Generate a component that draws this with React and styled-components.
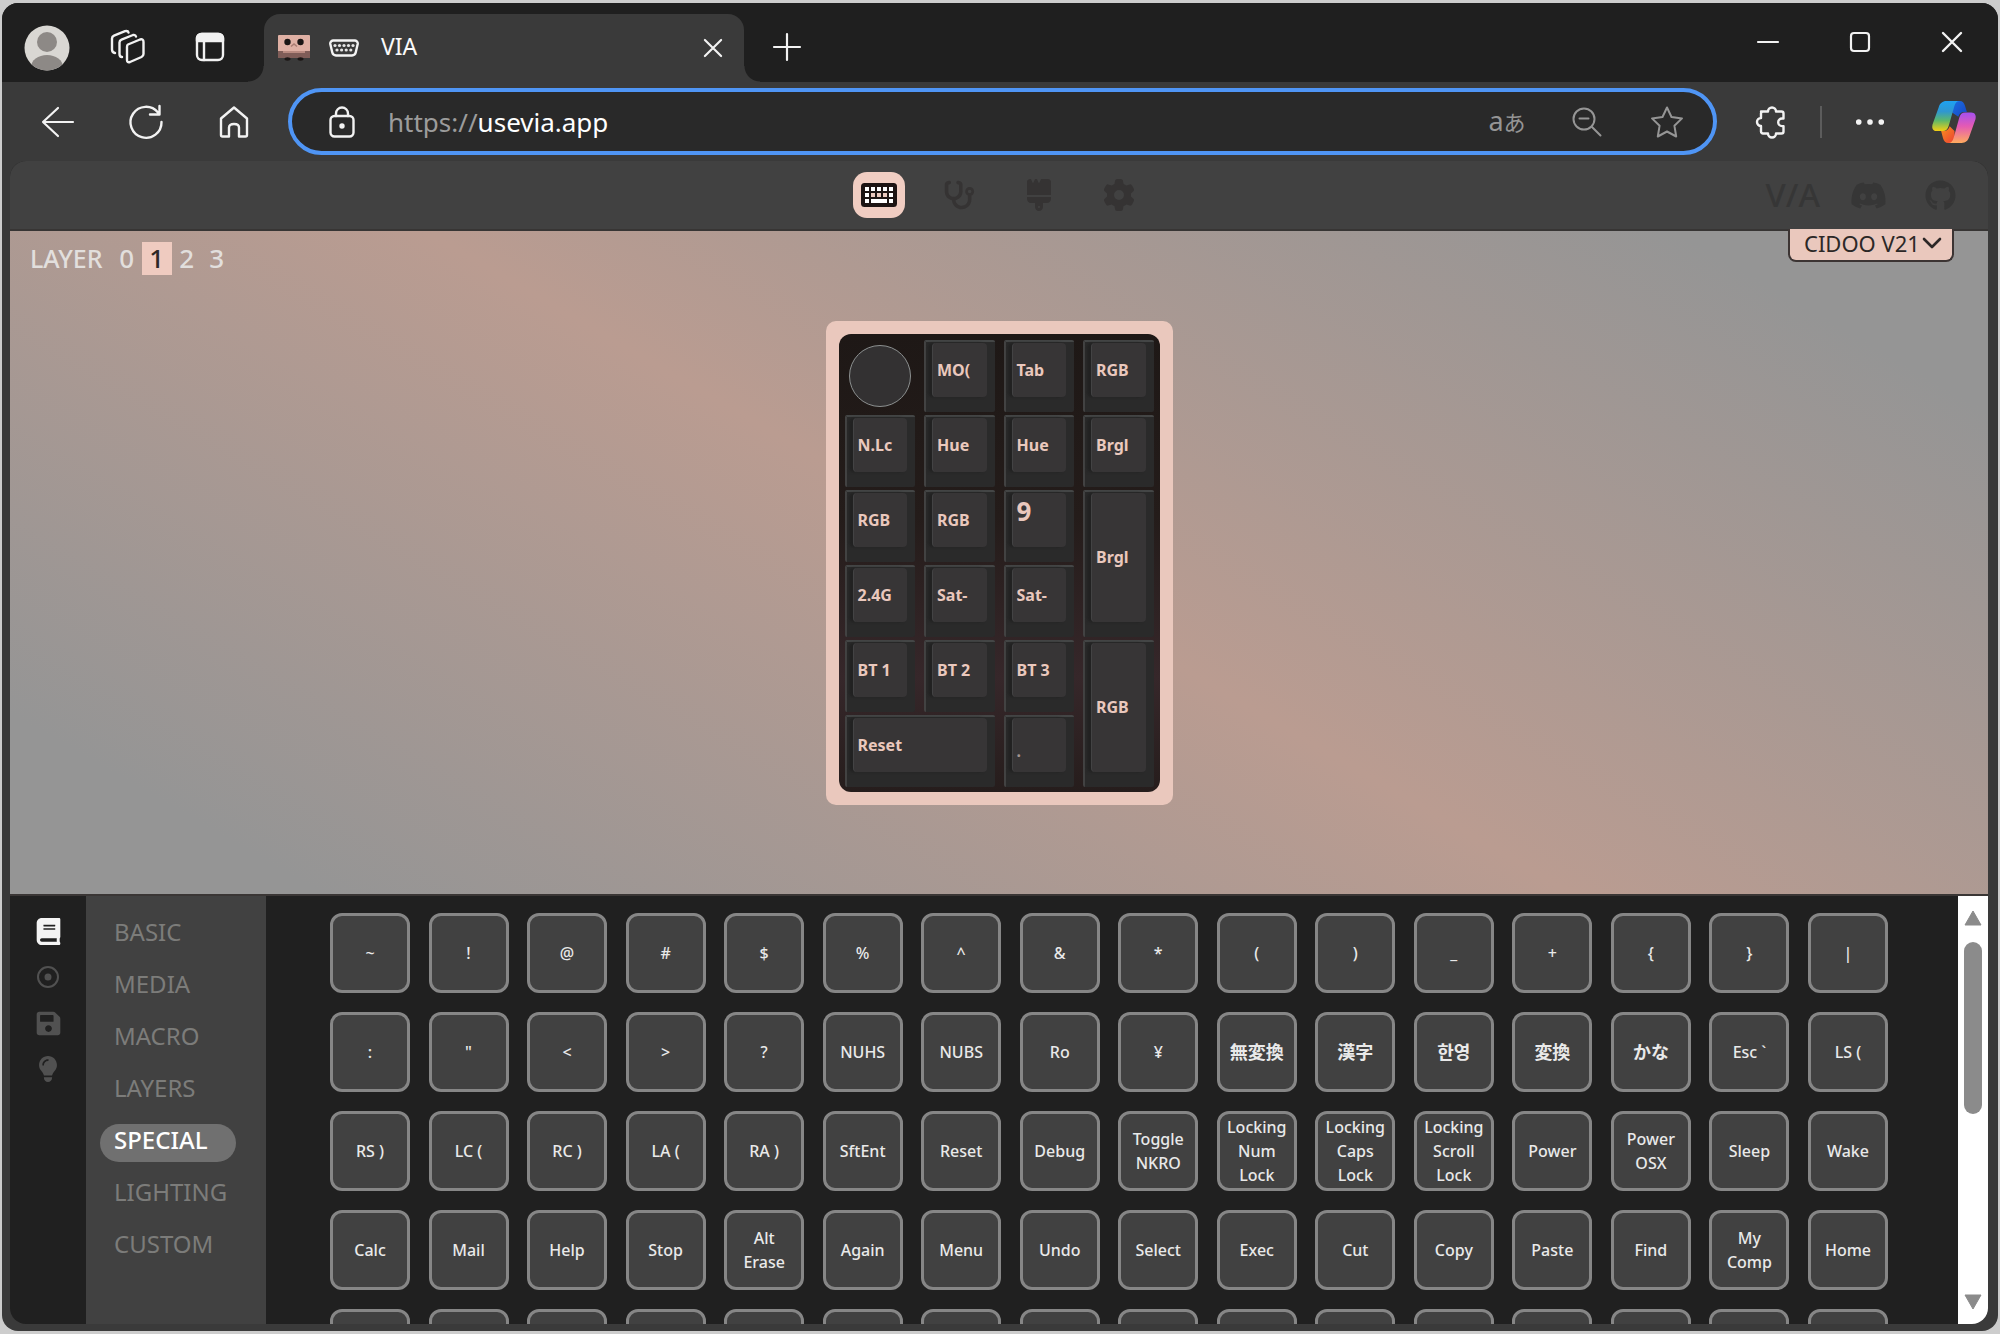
import React from "react";
import styled, { createGlobalStyle, css } from "styled-components";
import { FaStethoscope, FaBrush, FaGear, FaDiscord, FaGithub, FaLightbulb } from "react-icons/fa6";
import { FaBook, FaSave } from "react-icons/fa";

const sans = `"Noto Sans", "Noto Sans CJK JP", "Noto Sans CJK KR", sans-serif`;
const pink = "#eac8bd";

const GlobalStyle = createGlobalStyle`
  * { box-sizing: border-box; }
  body { margin: 0; background: #cdcdcd; font-family: ${sans}; }
  button, input, select { font-family: inherit; }
`;

const Window = styled.div`
  display: flex;
  flex-direction: column;
  height: 100vh;
  padding: 3px 2px;
`;

const Frame = styled.div`
  flex: 1;
  min-height: 0;
  display: flex;
  flex-direction: column;
  background: #3a3a3a;
  border-radius: 16px;
  overflow: hidden;
`;

const TitleBar = styled.header`
  display: flex;
  align-items: flex-end;
  height: 79px;
  background: #1f1f1f;
  padding: 0 24px 0 22px;
`;

const IconGroup = styled.div`
  display: flex;
  align-items: center;
  gap: ${(p) => p.$gap}px;
  height: ${(p) => p.$height || 70}px;
`;

const IconButton = styled.button`
  display: grid;
  place-items: center;
  flex: none;
  width: 44px;
  height: 44px;
  padding: 0;
  border: 0;
  background: none;
  color: ${(p) => p.$color || "#f2f2f2"};
  svg { display: block; overflow: visible; }
`;

const NewTab = styled(IconButton)`
  margin: 0 0 13px 21px;
`;

const Tab = styled.div`
  position: relative;
  display: flex;
  align-items: center;
  width: 480px;
  height: 68px;
  margin-left: 32px;
  padding: 0 9px 0 14px;
  background: #3a3a3a;
  border-radius: 16px 16px 0 0;
  color: #fafafa;
  font-size: 23px;
  &::before, &::after {
    content: "";
    position: absolute;
    bottom: 0;
    width: 16px;
    height: 16px;
  }
  &::before { left: -16px; background: radial-gradient(circle at 0 0, transparent 15px, #3a3a3a 16px); }
  &::after { right: -16px; background: radial-gradient(circle at 100% 0, transparent 15px, #3a3a3a 16px); }
`;

const TabTitle = styled.span`
  flex: 1;
  margin-left: 22px;
  padding-bottom: 4px;
`;

const Favicon = styled.svg`
  margin-right: 19px;
`;

const Spacer = styled.div`
  flex: 1;
`;

const Toolbar = styled.div`
  display: flex;
  align-items: center;
  height: 79px;
  padding: 0 22px 0 34px;
`;

const AddressBar = styled.form`
  flex: 1;
  display: flex;
  align-items: center;
  height: 67px;
  margin: 0 33px 0 32px;
  padding: 0 24px 0 28px;
  border: 4px solid #4f95f5;
  border-radius: 34px;
  background: #292929;
`;

const UrlLabel = styled.label`
  margin-left: 24px;
  color: #9c9c9c;
  font-size: 26px;
`;

const UrlInput = styled.input`
  flex: 1;
  min-width: 0;
  padding: 0;
  border: 0;
  outline: 0;
  background: none;
  color: #fff;
  font-size: 26px;
`;

const Translate = styled.span`
  font-size: 27px;
  line-height: 30px;
  white-space: nowrap;
  small { font-size: 22px; }
`;

const Divider = styled.div`
  width: 2px;
  height: 32px;
  margin: 0 26px;
  background: #5c5c5c;
`;

const Page = styled.div`
  flex: 1;
  min-height: 0;
  display: flex;
  flex-direction: column;
  margin: 0 10px 7px 8px;
  border-radius: 16px;
  overflow: hidden;
  background: #202020;
`;

const SiteNav = styled.nav`
  flex: none;
  display: grid;
  grid-template-columns: 1fr auto 1fr;
  align-items: center;
  height: 70px;
  background: #414141;
  border-bottom: 2px solid #373534;
`;

const NavTabs = styled.div`
  grid-column: 2;
  display: flex;
  gap: 28px;
`;

const NavTab = styled.button`
  display: grid;
  place-items: center;
  width: 52px;
  height: 46px;
  padding: 0;
  border: 0;
  border-radius: 14px;
  background: ${(p) => (p.$active ? "#f0cdc2" : "none")};
  color: #353333;
`;

const NavLinks = styled.div`
  justify-self: end;
  display: flex;
  align-items: center;
  gap: 30px;
  padding-right: 32px;
  a {
    display: flex;
    color: #363636;
    text-decoration: none;
    font-size: 33px;
    line-height: 40px;
    font-weight: 500;
  }
  a:last-child { margin-left: 8px; }
`;

const Stage = styled.section`
  position: relative;
  flex: 665 1 0;
  min-height: 0;
  display: grid;
  place-items: center;
  background: linear-gradient(30deg, #959595 10%, #ba9c91 50%, #959595 90%);
  border-bottom: 2px solid #3a3635;
`;

const LayerBar = styled.div`
  position: absolute;
  left: 20px;
  top: 11px;
  display: flex;
  align-items: center;
  color: #e2dfdd;
  font-size: 25px;
  line-height: 33px;
  font-weight: 500;
`;

const LayerLabel = styled.span`
  margin-right: 9px;
`;

const LayerButton = styled.button`
  width: 30px;
  height: 33px;
  padding: 0;
  border: 0;
  background: ${(p) => (p.$active ? "#efcbc0" : "none")};
  color: ${(p) => (p.$active ? "#2c2827" : "#e2dfdd")};
  font-size: 26px;
  line-height: 33px;
  font-weight: 500;
`;

const DeviceBadge = styled.label`
  position: absolute;
  top: -2px;
  right: 34px;
  display: flex;
  align-items: center;
  height: 33px;
  padding: 0 10px 4px 14px;
  border: 2px solid #3c3433;
  border-top: 0;
  border-radius: 0 0 8px 8px;
  background: ${pink};
  color: #2c2827;
`;

const DeviceSelect = styled.select`
  appearance: none;
  width: 118px;
  padding: 0;
  border: 0;
  background: none;
  color: inherit;
  font-size: 22px;
  line-height: 28px;
`;

const Case = styled.div`
  width: 347px;
  padding: 13px;
  border-radius: 10px;
  background: ${pink};
`;

const Plate = styled.div`
  display: grid;
  grid-template-columns: repeat(4, 1fr);
  grid-auto-rows: 72px;
  gap: 3px 9px;
  padding: 6px 6px 5px;
  border-radius: 12px;
  background: linear-gradient(#1e1816, #241c1a 40%, #36272a 75%, #261d1c);
`;

const Cap = styled.button`
  display: flex;
  grid-column: span ${(p) => p.$w || 1};
  grid-row: span ${(p) => p.$h || 1};
  padding: 1px 8px 15px 6px;
  border: 0;
  border-top: 2px solid #444646;
  border-left: 2px solid #424242;
  border-radius: 2px;
  background: #2a2a2a;
`;

const capAlign = { top: "flex-start", bottom: "flex-end" };

const CapFace = styled.span`
  flex: 1;
  min-width: 0;
  display: flex;
  align-items: ${(p) => capAlign[p.$align] || "center"};
  padding: 0 0 ${(p) => (p.$align === "bottom" ? 10 : 0)}px 4px;
  border-radius: 4px;
  border-left: 1px solid #434344;
  background: #373536;
  box-shadow: -4px 0 3px #222;
`;

const CapText = styled.span`
  white-space: nowrap;
  color: ${(p) => (p.$align === "bottom" ? "#a39490" : pink)};
  font-weight: 700;
  font-size: ${(p) => (p.$size === "large" ? 26 : 16)}px;
  line-height: ${(p) => (p.$size === "large" ? 36 : 22)}px;
  text-align: left;
`;

const Knob = styled.button`
  width: 62px;
  height: 62px;
  margin: 5px 0 0 4px;
  padding: 0;
  border: 1px solid #8c9090;
  border-radius: 50%;
  background: #333132;
`;

const Panel = styled.section`
  flex: 429 1 0;
  min-height: 0;
  display: flex;
  overflow: hidden;
`;

const Rail = styled.div`
  display: flex;
  flex-direction: column;
  align-items: center;
  width: 76px;
  padding-top: 12px;
`;

const RailButton = styled.button`
  display: grid;
  place-items: center;
  width: 44px;
  height: 46px;
  padding: 0;
  border: 0;
  background: none;
  color: ${(p) => (p.$active ? "#f4f4f4" : "#515151")};
`;

const Menu = styled.div`
  display: flex;
  flex-direction: column;
  align-items: flex-start;
  gap: 14px;
  width: 180px;
  padding: 20px 14px;
  background: #414141;
`;

const MenuItem = styled.button`
  width: 136px;
  height: 38px;
  padding: 0 0 6px 14px;
  border: 0;
  border-radius: 19px;
  background: none;
  color: #7c7c7a;
  font-size: 24px;
  line-height: 32px;
  text-align: left;
  white-space: nowrap;
  ${(p) => p.$active && css`
    background: #707070;
    color: #fff;
    font-weight: 500;
  `}
`;

const Keys = styled.div`
  flex: 1;
  display: grid;
  grid-template-columns: repeat(16, 80px);
  justify-content: space-between;
  grid-auto-rows: 80px;
  gap: 19px 0;
  padding: 17px 70px 0 64px;
`;

const Key = styled.button`
  padding: 0 6px;
  border: 3px solid #868686;
  border-radius: 12px;
  background: #414141;
  color: #e9e9e9;
  font-size: ${(p) => (p.$cjk ? 18 : 16)}px;
  line-height: 24px;
  font-weight: ${(p) => (p.$cjk ? 700 : 500)};
`;

const ScrollTrack = styled.div`
  display: flex;
  flex-direction: column;
  align-items: center;
  width: 30px;
  padding: 14px 0;
  background: #fff;
`;

const ScrollThumb = styled.div`
  width: 18px;
  height: 172px;
  margin: 16px 0 auto;
  border-radius: 9px;
  background: #8b8b8b;
`;

const Line = ({ size = 32, w = 2, children, vb = "0 0 32 32" }) => (
  <svg width={size} height={size} viewBox={vb} fill="none" stroke="currentColor" strokeWidth={w} strokeLinecap="round" strokeLinejoin="round">
    {children}
  </svg>
);

const Avatar = () => (
  <svg width="46" height="46" viewBox="0 0 46 46">
    <clipPath id="face"><circle cx="23" cy="23" r="22.5" /></clipPath>
    <circle cx="23" cy="23" r="22.5" fill="#d9d7d3" />
    <g clipPath="url(#face)" fill="#8d8986">
      <circle cx="23" cy="17" r="10" />
      <ellipse cx="23" cy="42" rx="16" ry="12" />
    </g>
  </svg>
);

const Workspaces = () => (
  <Line size={34} w={2.4} vb="0 0 34 34">
    <path d="M17 14.5 L29 9.5 Q32.5 8.5 32.5 12 V24 Q32.5 26 30.5 27 L19 32 Q16 33 16 30 V17 Q16 15 17 14.5Z" />
    <path d="M11 27 Q8.5 27 8.5 24 V12.5 Q8.5 10.5 10.5 9.7 L22 5 Q24.5 4.5 25 6.5" />
    <path d="M4 23 Q1 22.5 1 19.5 V8.5 Q1 6.5 3 5.7 L14 1.2 Q17 .5 17.5 2.5" />
  </Line>
);

const TabActions = () => (
  <Line size={30} w={2.4} vb="0 0 30 30">
    <rect x="2" y="2" width="26" height="26" rx="5" />
    <path d="M9 9V28" />
    <path d="M2 9V6a4 4 0 0 1 4-4h18a4 4 0 0 1 4 4v3z" fill="currentColor" />
  </Line>
);

const Robot = () => (
  <Favicon width="32" height="26" viewBox="0 0 32 26">
    <rect width="32" height="17" rx="1" fill="#dfb0a4" />
    <rect y="16" width="32" height="7" fill="#805d58" />
    <rect x="5" y="16" width="22" height="2" fill="#b98a80" />
    <g fill="#1b1615">
      <circle cx="9.5" cy="7" r="3.2" />
      <circle cx="22.5" cy="7" r="3.2" />
      <ellipse cx="9.5" cy="24" rx="3" ry="1.7" />
      <ellipse cx="22.5" cy="24" rx="3" ry="1.7" />
    </g>
    <path d="M13 11.5l3-2.5 3 2.500" fill="none" stroke="#a97b71" strokeWidth="1.5" />
  </Favicon>
);

const SerialPort = () => (
  <svg width="30" height="18" viewBox="0 0 30 18">
    <path d="M4 1.5h22a3 3 0 0 1 2.7 3.5l-2 8.500a4 4 0 0 1-3.700 3H7a4 4 0 0 1-3.700-3L1.300 5A3 3 0 0 1 4 1.500z" fill="#3a3a3a" stroke="#f4f4f4" strokeWidth="2.4" />
    <g fill="#e6e6e6">
      {[6, 10.5, 15, 19.5, 24].map((x) => <circle key={x} cx={x} cy="6.5" r="1.6" />)}
      {[8, 12.6, 17.2, 21.8].map((x) => <circle key={x} cx={x} cy="11" r="1.6" />)}
    </g>
  </svg>
);

const Cross = ({ size }) => <Line size={size} vb="0 0 20 20" w={2.4}><path d="M1 1L19 19M19 1L1 19" /></Line>;

const Copilot = () => (
  <svg width="44" height="42" viewBox="0 0 46 44">
    <defs>
      <linearGradient id="cpA" x1="0" y1="0" x2="0" y2="1">
        <stop offset="0" stopColor="#1ea2f2" /><stop offset=".35" stopColor="#2f97d0" />
        <stop offset=".65" stopColor="#5db86a" /><stop offset="1" stopColor="#f5cf12" />
      </linearGradient>
      <linearGradient id="cpB" x1="0" y1="0" x2="0" y2="1">
        <stop offset="0" stopColor="#a450f0" /><stop offset=".45" stopColor="#e45ab4" />
        <stop offset="1" stopColor="#ffab5e" />
      </linearGradient>
      <linearGradient id="cpC" x1="0" y1="0" x2="1" y2="1">
        <stop offset="0" stopColor="#1b6fe0" /><stop offset="1" stopColor="#1746c4" />
      </linearGradient>
      <linearGradient id="cpD" x1="0" y1="0" x2="1" y2="1">
        <stop offset="0" stopColor="#f5921e" /><stop offset="1" stopColor="#ee3f34" />
      </linearGradient>
    </defs>
    <path d="M22 0h7c3 0 4.500 2 5.500 5l2 6.500h-3c-3 0-5 2-6 5L21 12z" fill="url(#cpC)" />
    <path d="M24 44h-7c-3 0-4.500-2-5.500-5l-2-7.500h3c3 0 5-2 6-5l5 5z" fill="url(#cpD)" />
    <path d="M15 0h14c-3 0-4.500 2-5.500 5l-6 21c-1 3.500-3 5.500-6 5.500H5c-4 0-5.500-3-4.500-7L7 6.500C8.200 2.500 11 0 15 0z" fill="url(#cpA)" />
    <path d="M31 44H17c3 0 4.500-2 5.500-5l6-21.500c1-3.500 3-5.500 6-5.500H41c4 0 5.500 3 4.500 7L39 37.500C37.800 41.500 35 44 31 44z" fill="url(#cpB)" />
  </svg>
);

const KeyboardIcon = () => (
  <svg width="36" height="24" viewBox="0 0 36 24">
    <rect width="36" height="24" rx="3.5" fill="#1d1413" />
    <g fill="#fff">
      {[4, 10, 16, 22, 28].map((x) => <rect key={x} x={x} y="4" width="4" height="4" />)}
      {[4, 10, 16, 22, 28].map((x) => <rect key={x} x={x} y="10" width="4" height="4" fill={x === 4 || x === 28 ? "#fff" : pink} />)}
      <rect x="4" y="16" width="4" height="4" />
      <rect x="10" y="16" width="16" height="4" />
      <rect x="28" y="16" width="4" height="4" />
    </g>
  </svg>
);

const Arrow = ({ down }) => (
  <svg width="18" height="16" viewBox="0 0 18 16">
    <path d={down ? "M1 1H17L9 15z" : "M9 1L17 15H1z"} fill="#8b8b8b" stroke="#8b8b8b" strokeWidth="1" strokeLinejoin="round" />
  </svg>
);

const caps = [
  { t: "MO(" }, { t: "Tab" }, { t: "RGB" },
  { t: "N.Lc" }, { t: "Hue" }, { t: "Hue" }, { t: "Brgl" },
  { t: "RGB" }, { t: "RGB" }, { t: "9", size: "large", align: "top" }, { t: "Brgl", h: 2 },
  { t: "2.4G" }, { t: "Sat-" }, { t: "Sat-" },
  { t: "BT 1" }, { t: "BT 2" }, { t: "BT 3" }, { t: "RGB", h: 2 },
  { t: "Reset", w: 2 }, { t: ".", align: "bottom" },
];

const keys = [
  "~", "!", "@", "#", "$", "%", "^", "&", "*", "(", ")", "_", "+", "{", "}", "|",
  ":", "\"", "<", ">", "?", "NUHS", "NUBS", "Ro", "¥", "無変換", "漢字", "한영", "変換", "かな", "Esc `", "LS (",
  "RS )", "LC (", "RC )", "LA (", "RA )", "SftEnt", "Reset", "Debug", "Toggle NKRO", "Locking Num Lock",
  "Locking Caps Lock", "Locking Scroll Lock", "Power", "Power OSX", "Sleep", "Wake",
  "Calc", "Mail", "Help", "Stop", "Alt Erase", "Again", "Menu", "Undo", "Select", "Exec", "Cut", "Copy",
  "Paste", "Find", "My Comp", "Home",
  ...Array(16).fill(""),
];

const isCjk = (s) => /[\u3040-\u9fff\uac00-\ud7af]/.test(s);

const menu = ["BASIC", "MEDIA", "MACRO", "LAYERS", "SPECIAL", "LIGHTING", "CUSTOM"];

export default function App() {
  return (
    <Window>
      <GlobalStyle />
      <Frame>
        <TitleBar>
          <IconGroup $gap={38}>
            <IconButton><Avatar /></IconButton>
            <IconButton><Workspaces /></IconButton>
            <IconButton><TabActions /></IconButton>
          </IconGroup>
          <Tab>
            <Robot />
            <SerialPort />
            <TabTitle>VIA</TabTitle>
            <IconButton><Cross size={18} /></IconButton>
          </Tab>
          <NewTab><Line size={28} w={2.2} vb="0 0 28 28"><path d="M14 1V27M1 14H27" /></Line></NewTab>
          <Spacer />
          <IconGroup $gap={48} $height={80}>
            <IconButton><Line size={20} w={2.2} vb="0 0 20 20"><path d="M0 10H20" /></Line></IconButton>
            <IconButton><Line size={20} w={2.2} vb="0 0 20 20"><rect x="1" y="1" width="18" height="18" rx="3" /></Line></IconButton>
            <IconButton><Cross size={20} /></IconButton>
          </IconGroup>
        </TitleBar>

        <Toolbar>
          <IconGroup $gap={44}>
            <IconButton><Line w={2.2}><path d="M31 16H1M16 2L1 16L16 30" /></Line></IconButton>
            <IconButton><Line size={34} w={2.4} vb="0 0 34 34"><path d="M29 7.5A15.5 15.5 0 1 0 32.5 17M30.5 1V9.5H21" /></Line></IconButton>
            <IconButton><Line w={2.4}><path d="M3 12.5L16 1.5L29 12.5V29Q29 30.5 27.5 30.5H21V21.5Q21 18 16 18Q11 18 11 21.5V30.5H4.5Q3 30.5 3 29Z" /></Line></IconButton>
          </IconGroup>
          <AddressBar onSubmit={(e) => e.preventDefault()}>
            <IconButton as="span">
              <Line w={2.4}><rect x="4.5" y="10" width="23" height="20.5" rx="4" /><path d="M10 10V7.5a6 6 0 0 1 12 0V10" /><circle cx="16" cy="20" r="1.5" fill="currentColor" /></Line>
            </IconButton>
            <UrlLabel htmlFor="url">https://</UrlLabel>
            <UrlInput id="url" defaultValue="usevia.app" spellCheck={false} />
            <IconGroup $gap={36} $height={58}>
              <IconButton $color="#959595"><Translate>a<small>あ</small></Translate></IconButton>
              <IconButton $color="#959595"><Line size={30} w={2} vb="0 0 30 30"><circle cx="12" cy="12" r="10.5" /><path d="M7.5 11.5H16.5M20 20L28.5 28.5" /></Line></IconButton>
              <IconButton $color="#959595"><Line w={2}><path d="M16 1.5L20.5 11L31 12.4L23.4 19.7L25.2 30.5L16 25.5L6.8 30.5L8.6 19.7L1 12.4L11.5 11Z" /></Line></IconButton>
            </IconGroup>
          </AddressBar>
          <IconButton>
            <Line w={2.4}><path d="M5 5.500H12a4 4 0 0 1 8 0H25.500a2 2 0 0 1 2 2V12.500H26a3.800 3.800 0 0 0 0 7.600H27.500V25.500a2 2 0 0 1-2 2H20a4 4 0 0 1-8 0H7a2 2 0 0 1-2-2V20a4 4 0 0 1 0-8V7.500a2 2 0 0 1 2-2" /></Line>
          </IconButton>
          <Divider />
          <IconGroup $gap={40}>
            <IconButton><Line size={30}><g fill="currentColor"><circle cx="4" cy="16" r="2" /><circle cx="16" cy="16" r="2" /><circle cx="28" cy="16" r="2" /></g></Line></IconButton>
            <IconButton><Copilot /></IconButton>
          </IconGroup>
        </Toolbar>

        <Page>
          <SiteNav>
            <NavTabs>
              <NavTab $active><KeyboardIcon /></NavTab>
              <NavTab><FaStethoscope size={32} /></NavTab>
              <NavTab><FaBrush size={32} /></NavTab>
              <NavTab><FaGear size={32} /></NavTab>
            </NavTabs>
            <NavLinks>
              <a href="#via">V/A</a>
              <a href="#discord"><FaDiscord size={37} /></a>
              <a href="#github"><FaGithub size={31} /></a>
            </NavLinks>
          </SiteNav>

          <Stage>
            <LayerBar>
              <LayerLabel>LAYER</LayerLabel>
              {[0, 1, 2, 3].map((n) => <LayerButton key={n} $active={n === 1}>{n}</LayerButton>)}
            </LayerBar>
            <DeviceBadge>
              <DeviceSelect defaultValue="v21"><option value="v21">CIDOO V21</option></DeviceSelect>
              <Line size={20} w={2.6} vb="0 0 20 20"><path d="M2 6L10 14L18 6" /></Line>
            </DeviceBadge>
            <Case>
              <Plate>
                <Knob />
                {caps.map((c, i) => (
                  <Cap key={i} $w={c.w} $h={c.h}>
                    <CapFace $align={c.align}>
                      <CapText $size={c.size} $align={c.align}>{c.t}</CapText>
                    </CapFace>
                  </Cap>
                ))}
              </Plate>
            </Case>
          </Stage>

          <Panel>
            <Rail>
              <RailButton $active><FaBook size={27} /></RailButton>
              <RailButton><Line size={22} w={2} vb="0 0 22 22"><circle cx="11" cy="11" r="10" /><circle cx="11" cy="11" r="2.5" fill="currentColor" /></Line></RailButton>
              <RailButton><FaSave size={27} /></RailButton>
              <RailButton><FaLightbulb size={26} /></RailButton>
            </Rail>
            <Menu>
              {menu.map((m) => <MenuItem key={m} $active={m === "SPECIAL"}>{m}</MenuItem>)}
            </Menu>
            <Keys>
              {keys.map((k, i) => <Key key={i} $cjk={isCjk(k)}>{k}</Key>)}
            </Keys>
            <ScrollTrack>
              <Arrow />
              <ScrollThumb />
              <Arrow down />
            </ScrollTrack>
          </Panel>
        </Page>
      </Frame>
    </Window>
  );
}
